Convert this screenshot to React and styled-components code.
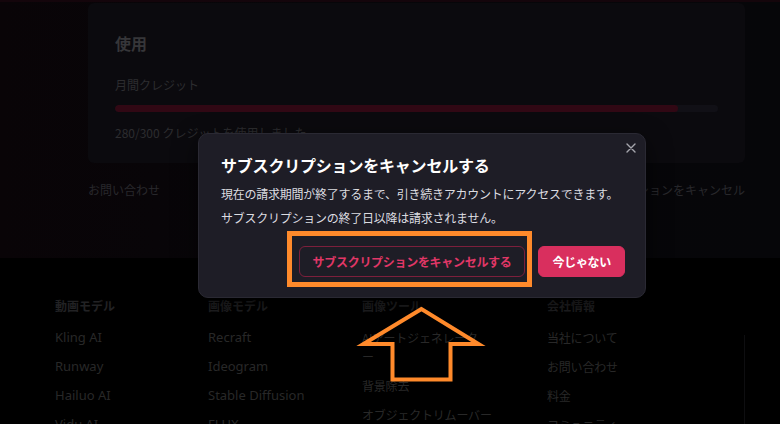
import React from "react";
import styled, { createGlobalStyle } from "styled-components";

const GlobalStyle = createGlobalStyle`
  html, body {
    margin: 0;
    padding: 0;
    background: #000;
    font-family: "Noto Sans", "Noto Sans CJK JP", sans-serif;
    overflow: hidden;
  }
  * { box-sizing: border-box; }
`;

const footerColumns = [
  { title: "動画モデル", links: ["Kling AI", "Runway", "Hailuo AI", "Vidu AI"] },
  { title: "画像モデル", links: ["Recraft", "Ideogram", "Stable Diffusion", "FLUX"] },
  { title: "画像ツール", links: ["AIアートジェネレータ\nー", "背景除去", "オブジェクトリムーバー"] },
  { title: "会社情報", links: ["当社について", "お問い合わせ", "料金", "コミュニティ"] },
];

const isLatin = (s) => /^[A-Za-z ]+$/.test(s);

export default function App() {
  const used = 280;
  const total = 300;
  return (
    <Page>
      <GlobalStyle />
      <Main>
        <UsageCard>
          <CardTitle>使用</CardTitle>
          <CardLabel>月間クレジット</CardLabel>
          <Track>
            <Fill style={{ width: `${(used / total) * 100}%` }} />
          </Track>
          <CardLabel>{used}/{total} クレジットを使用しました</CardLabel>
        </UsageCard>
        <LinkRow>
          <PageLink>お問い合わせ</PageLink>
          <PageLink>サブスクリプションをキャンセル</PageLink>
        </LinkRow>
      </Main>
      <Footer>
        {footerColumns.map((col) => (
          <FooterColumn key={col.title}>
            <FooterHeading>{col.title}</FooterHeading>
            {col.links.map((l) => (
              <FooterLink key={l} $latin={isLatin(l)}>{l}</FooterLink>
            ))}
          </FooterColumn>
        ))}
        <FooterDivider />
      </Footer>

      <Overlay>
        <Dialog>
          <CloseButton aria-label="閉じる">
            <svg width="10" height="10" viewBox="0 0 10 10">
              <path d="M1 1 L9 9 M9 1 L1 9" stroke="#a6a6ad" strokeWidth="1.4" strokeLinecap="round" />
            </svg>
          </CloseButton>
          <DialogTitle>サブスクリプションをキャンセルする</DialogTitle>
          <DialogText>現在の請求期間が終了するまで、引き続きアカウントにアクセスできます。</DialogText>
          <DialogText>サブスクリプションの終了日以降は請求されません。</DialogText>
          <Actions>
            <ActionButton $variant="outline">サブスクリプションをキャンセルする</ActionButton>
            <ActionButton $variant="solid">今じゃない</ActionButton>
          </Actions>
        </Dialog>
      </Overlay>

      <Annotation width="780" height="424" viewBox="0 0 780 424">
        <rect x="289.5" y="233.5" width="240" height="51" fill="none" stroke="#ff8a2b" strokeWidth="5" />
        <polygon
          points="421.5,309 363.5,344 392.5,344 392.5,379.5 450.5,379.5 450.5,344 478.5,344"
          fill="none"
          stroke="#ff8a2b"
          strokeWidth="4"
          strokeLinejoin="miter"
        />
      </Annotation>
    </Page>
  );
}

const Page = styled.div`
  position: relative;
  width: 780px;
  height: 424px;
  overflow: hidden;
  background: #000;
`;

const Main = styled.div`
  height: 258px;
  padding: 3px 35px 0 88px;
  background: linear-gradient(90deg, #090407 0%, #070609 40%, #060609 100%);
  box-shadow: inset 0 2px 0 #14050b;
`;

const UsageCard = styled.div`
  width: 657px;
  height: 160px;
  padding: 28px 27px 0 27px;
  background: #0b0a0e;
  border-radius: 6px;
`;

const CardTitle = styled.h2`
  margin: 0 0 22px;
  font-family: "Noto Sans CJK JP", sans-serif;
  font-size: 16px;
  line-height: 24px;
  font-weight: 700;
  color: #363639;
`;

const CardLabel = styled.div`
  font-family: "Noto Sans CJK JP", sans-serif;
  font-size: 12px;
  line-height: 16px;
  color: #2d2d30;
`;

const Track = styled.div`
  margin: 12px 0 13px;
  height: 7px;
  border-radius: 4px;
  background: #111016;
  overflow: hidden;
`;

const Fill = styled.div`
  height: 100%;
  border-radius: 4px;
  background: #310814;
`;

const LinkRow = styled.div`
  width: 657px;
  display: flex;
  justify-content: space-between;
  margin-top: 19px;
`;

const PageLink = styled.span`
  font-family: "Noto Sans CJK JP", sans-serif;
  font-size: 12px;
  line-height: 16px;
  color: #28282c;
`;

const Footer = styled.div`
  position: relative;
  display: grid;
  grid-template-columns: 153px 154px 185px 1fr;
  padding: 40px 0 0 55px;
  height: 166px;
  background: #000;
`;

const FooterColumn = styled.div`
  display: flex;
  flex-direction: column;
`;

const FooterHeading = styled.div`
  font-family: "Noto Sans CJK JP", sans-serif;
  font-size: 12px;
  line-height: 16px;
  font-weight: 700;
  color: #222224;
  margin-bottom: 14px;
`;

const FooterLink = styled.div`
  font-family: ${(p) => (p.$latin ? `"Noto Sans", sans-serif` : `"Noto Sans CJK JP", sans-serif`)};
  font-size: ${(p) => (p.$latin ? "13px" : "12px")};
  letter-spacing: ${(p) => (p.$latin ? "0" : "-0.2px")};
  line-height: 19px;
  color: #282828;
  margin-bottom: 10px;
  white-space: pre;
`;

const FooterDivider = styled.div`
  position: absolute;
  left: 744px;
  top: 77px;
  bottom: 0;
  border-left: 1px solid #0e0e10;
`;

const Overlay = styled.div`
  position: absolute;
  inset: 0;
  padding: 133px 0 0 198px;
`;

const Dialog = styled.div`
  position: relative;
  width: 448px;
  height: 165px;
  padding: 20px 20px 0 22px;
  background: #1e1d26;
  border: 1px solid #2a2933;
  border-radius: 10px;
  box-shadow: 0 8px 24px rgba(0, 0, 0, 0.6);
`;

const CloseButton = styled.button`
  position: absolute;
  top: 9px;
  right: 9px;
  display: flex;
  padding: 0;
  border: none;
  background: none;
`;

const DialogTitle = styled.h3`
  margin: 0 0 10px;
  font-family: "Noto Sans CJK JP", sans-serif;
  font-size: 16px;
  line-height: 22px;
  font-weight: 700;
  letter-spacing: -0.2px;
  color: #ffffff;
`;

const DialogText = styled.p`
  margin: 0 0 8px;
  font-family: "Noto Sans CJK JP", sans-serif;
  font-size: 12px;
  line-height: 16px;
  letter-spacing: -0.25px;
  white-space: nowrap;
  color: #dcdce0;
`;

const Actions = styled.div`
  display: flex;
  justify-content: flex-end;
  gap: 13px;
  margin-top: 20px;
`;

const ActionButton = styled.button`
  height: 31px;
  padding: 0 13px;
  border-radius: 6px;
  font-family: "Noto Sans CJK JP", sans-serif;
  font-size: 12px;
  font-weight: 700;
  letter-spacing: -0.3px;
  border: 1px solid ${(p) => (p.$variant === "solid" ? "#d92f5e" : "#7d1f3c")};
  background: ${(p) => (p.$variant === "solid" ? "#d92f5e" : "transparent")};
  color: ${(p) => (p.$variant === "solid" ? "#ffffff" : "#e13767")};
`;

const Annotation = styled.svg`
  position: absolute;
  left: 0;
  top: 0;
  pointer-events: none;
`;
